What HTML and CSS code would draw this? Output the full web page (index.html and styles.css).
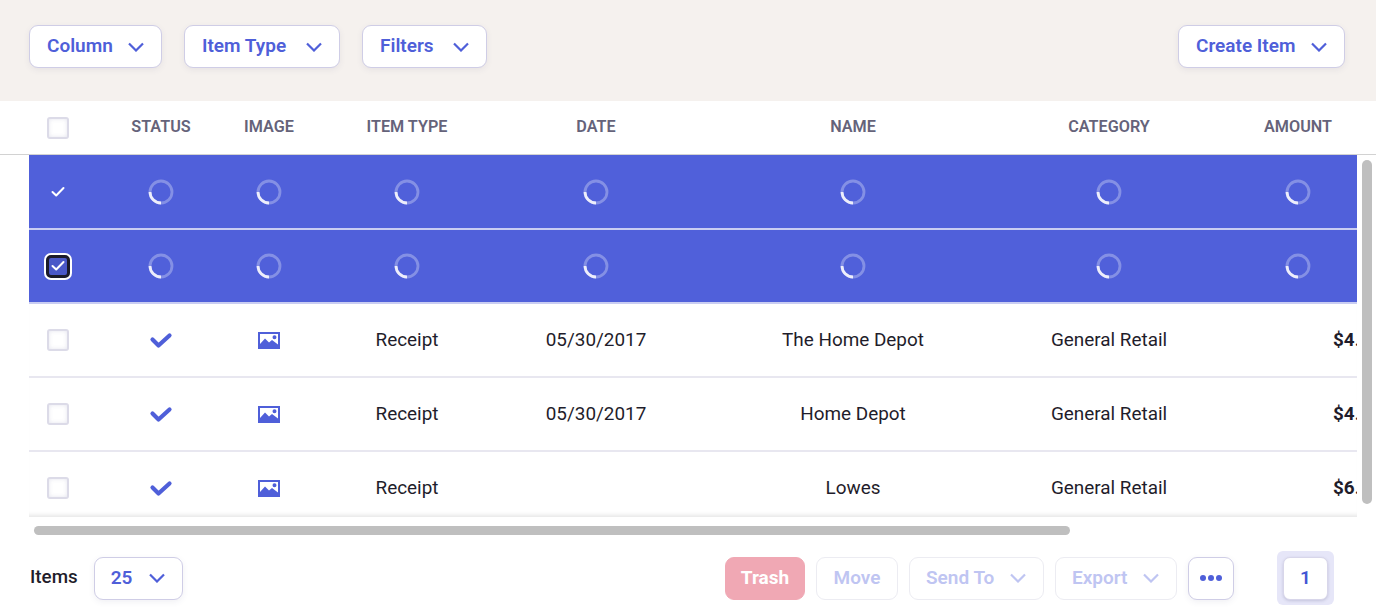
FILE: index.html
```html
<!DOCTYPE html>
<html lang="en">
<head>
<meta charset="utf-8">
<title>Items</title>
<link rel="stylesheet" href="styles.css">
</head>
<body>
<svg class="defs" width="0" height="0" aria-hidden="true">
  <symbol id="chev" viewBox="0 0 16 10"><path d="M1 1.500 8 8.500 15 1.500" fill="none" stroke="currentColor" stroke-width="2.200"/></symbol>
  <symbol id="tick" viewBox="0 0 24 18"><path d="M3.500 8.500 9.500 14.500 20.500 4.500" fill="none" stroke="currentColor" stroke-width="4.200" stroke-linecap="round" stroke-linejoin="round"/></symbol>
  <symbol id="small" viewBox="0 0 14 12"><path d="M1.500 6 5.200 9.500 12.500 2" fill="none" stroke="currentColor" stroke-width="2" stroke-linecap="round" stroke-linejoin="round"/></symbol>
  <symbol id="pic" viewBox="0 0 22 17"><path fill-rule="evenodd" fill="currentColor" d="M0 0H22V17H0ZM2 2V12L7 6.500 11 10.500 14 8 20 12.500V2ZM16.500 3.200A2 2 0 1 1 16.500 7.200 2 2 0 1 1 16.500 3.200Z"/></symbol>
  <symbol id="spin" viewBox="0 0 26 26"><circle cx="13" cy="13" r="11" fill="none" stroke="#fff" stroke-opacity=".3" stroke-width="2.800"/><path d="M2 13A11 11 0 0 0 13 24" fill="none" stroke="#fff" stroke-opacity=".85" stroke-width="2.800"/></symbol>
</svg>

<header class="toolbar">
  <div class="group">
    <button class="btn w-column">Column <svg class="chev"><use href="#chev"/></svg></button>
    <button class="btn w-type">Item Type <svg class="chev"><use href="#chev"/></svg></button>
    <button class="btn w-filters">Filters <svg class="chev"><use href="#chev"/></svg></button>
  </div>
  <button class="btn w-create">Create Item <svg class="chev"><use href="#chev"/></svg></button>
</header>

<section class="table">
  <div class="row head">
    <div class="cell"><span class="box"></span></div>
    <div class="cell">STATUS</div>
    <div class="cell">IMAGE</div>
    <div class="cell">ITEM TYPE</div>
    <div class="cell">DATE</div>
    <div class="cell">NAME</div>
    <div class="cell">CATEGORY</div>
    <div class="cell">AMOUNT</div>
  </div>
  <div class="viewport">
    <div class="rows">
      <div class="row sel first">
        <div class="cell"><svg class="small"><use href="#small"/></svg></div>
        <div class="cell"><svg class="spin"><use href="#spin"/></svg></div>
        <div class="cell"><svg class="spin"><use href="#spin"/></svg></div>
        <div class="cell"><svg class="spin"><use href="#spin"/></svg></div>
        <div class="cell"><svg class="spin"><use href="#spin"/></svg></div>
        <div class="cell"><svg class="spin"><use href="#spin"/></svg></div>
        <div class="cell"><svg class="spin"><use href="#spin"/></svg></div>
        <div class="cell"><svg class="spin"><use href="#spin"/></svg></div>
      </div>
      <div class="row sel">
        <div class="cell"><span class="focus"><svg class="small"><use href="#small"/></svg></span></div>
        <div class="cell"><svg class="spin"><use href="#spin"/></svg></div>
        <div class="cell"><svg class="spin"><use href="#spin"/></svg></div>
        <div class="cell"><svg class="spin"><use href="#spin"/></svg></div>
        <div class="cell"><svg class="spin"><use href="#spin"/></svg></div>
        <div class="cell"><svg class="spin"><use href="#spin"/></svg></div>
        <div class="cell"><svg class="spin"><use href="#spin"/></svg></div>
        <div class="cell"><svg class="spin"><use href="#spin"/></svg></div>
      </div>
      <div class="row">
        <div class="cell"><span class="box"></span></div>
        <div class="cell"><svg class="tick"><use href="#tick"/></svg></div>
        <div class="cell"><svg class="pic"><use href="#pic"/></svg></div>
        <div class="cell txt">Receipt</div>
        <div class="cell txt">05/30/2017</div>
        <div class="cell txt">The Home Depot</div>
        <div class="cell txt">General Retail</div>
        <div class="cell txt amount">$4.97</div>
      </div>
      <div class="row">
        <div class="cell"><span class="box"></span></div>
        <div class="cell"><svg class="tick"><use href="#tick"/></svg></div>
        <div class="cell"><svg class="pic"><use href="#pic"/></svg></div>
        <div class="cell txt">Receipt</div>
        <div class="cell txt">05/30/2017</div>
        <div class="cell txt">Home Depot</div>
        <div class="cell txt">General Retail</div>
        <div class="cell txt amount">$4.97</div>
      </div>
      <div class="row last">
        <div class="cell"><span class="box"></span></div>
        <div class="cell"><svg class="tick"><use href="#tick"/></svg></div>
        <div class="cell"><svg class="pic"><use href="#pic"/></svg></div>
        <div class="cell txt">Receipt</div>
        <div class="cell txt"></div>
        <div class="cell txt">Lowes</div>
        <div class="cell txt">General Retail</div>
        <div class="cell txt amount">$6.48</div>
      </div>
    </div>
    <div class="vbar"><div class="vthumb"></div></div>
  </div>
  <div class="hbar"><div class="hthumb"></div></div>
</section>

<footer class="footer">
  <div class="group items">
    <span class="label">Items</span>
    <button class="btn w-count">25 <svg class="chev"><use href="#chev"/></svg></button>
  </div>
  <div class="group actions">
    <button class="btn plain trash">Trash</button>
    <button class="btn plain off w-move">Move</button>
    <button class="btn off w-send">Send To <svg class="chev"><use href="#chev"/></svg></button>
    <button class="btn off w-export">Export <svg class="chev"><use href="#chev"/></svg></button>
    <button class="btn plain more" aria-label="More"><i></i><i></i><i></i></button>
    <div class="pager"><button class="page">1</button></div>
  </div>
</footer>
</body>
</html>
```
FILE: styles.css
```css
* { box-sizing: border-box; }
html, body { margin: 0; padding: 0; }
body {
  width: 1376px;
  height: 615px;
  overflow: hidden;
  background: #fff;
  font-family: Roboto, "Liberation Sans", sans-serif;
  color: #1f1d2b;
}
.defs { display: block; height: 0; }

.toolbar {
  height: 101px;
  background: #f5f1ee;
  padding: 25px 31px 0 29px;
  display: flex;
  justify-content: space-between;
  align-items: flex-start;
}
.group { display: flex; gap: 22px; align-items: center; }

.btn {
  height: 43px;
  padding: 0 17px 2px;
  display: flex;
  align-items: center;
  background: #fff;
  border: 1px solid #cfcde6;
  border-radius: 9px;
  box-shadow: 0 2px 6px rgba(60, 60, 110, .08);
  font: 600 19px Roboto, sans-serif;
  color: #4f5fd9;
  white-space: nowrap;
}
.chev { width: 16px; height: 10px; margin-left: auto; margin-bottom: -2px; }
.w-column { width: 133px; }
.w-type { width: 156px; }
.w-filters { width: 125px; }
.w-create { width: 167px; }
.w-count { width: 89px; padding-left: 16px; }
.w-move { width: 82px; }
.w-send { width: 135px; padding-left: 16px; }
.w-export { width: 122px; padding-left: 16px; }
.plain { justify-content: center; padding: 0 0 2px; }

.row {
  display: grid;
  grid-template-columns: 58px 148px 68px 208px 170px 344px 168px 210px;
  height: 74px;
  align-items: center;
  font-size: 18.900px;
  border-bottom: 2px solid #e8e7f0;
  white-space: nowrap;
}
.cell { display: flex; justify-content: center; align-items: center; min-width: 0; }
.txt { padding-bottom: 2px; }

.head {
  height: 54px;
  padding-left: 29px;
  font-size: 16.200px;
  font-weight: 600;
  color: #65637a;
  border-bottom: 1px solid #d2d2d2;
}
.head .cell + .cell { padding-bottom: 2px; }

.viewport {
  display: flex;
  height: 362px;
  padding-left: 29px;
}
.rows {
  width: 1328px;
  height: 362px;
  overflow: hidden;
  box-shadow: inset 0 -5px 4px -3px rgba(0, 0, 0, .1);
}
.sel { background: #5060da; border-bottom-color: #c9cdf2; color: #fff; }
.first { height: 75px; }
.last { border-bottom: 0; height: 72px; }
.amount { justify-content: flex-start; padding-left: 140px; font-weight: 700; }

.box {
  display: block;
  width: 22px;
  height: 22px;
  border: 2px solid #dcdbe8;
  border-radius: 3px;
  background: #fff;
  box-shadow: inset 0 0 4px rgba(80, 80, 140, .15);
}
.small { width: 14px; height: 12px; color: #fff; display: block; }
.focus {
  width: 24px;
  height: 23px;
  display: flex;
  align-items: center;
  justify-content: center;
  border: 3px solid #1b1b2a;
  border-radius: 5px;
  background: #4a58c8;
  box-shadow: 0 0 0 2px #fff;
}
.spin { width: 26px; height: 26px; }
.tick { width: 24px; height: 18px; color: #4f5fd9; }
.pic { width: 22px; height: 17px; color: #4f5fd9; }

.vbar { width: 19px; padding: 5px 4px 0 5px; }
.vthumb { width: 10px; height: 344px; background: #bfbfbf; border-radius: 5px; }

.hbar { height: 34px; padding: 9px 0 0 34px; }
.hthumb { width: 1036px; height: 9px; background: #bfbfbf; border-radius: 5px; }

.footer {
  height: 54px;
  display: flex;
  justify-content: space-between;
  align-items: center;
  padding: 0 42px 0 30px;
}
.items { gap: 16px; }
.label { font-size: 18.800px; font-weight: 500; color: #1f1d2b; padding-bottom: 2px; }
.actions { gap: 11px; }
.trash {
  width: 80px;
  background: #f0a8b4;
  border-color: #f0a8b4;
  color: #fff;
  font-weight: 700;
  box-shadow: none;
}
.off {
  color: #bfc5f2;
  border-color: #ececf2;
  box-shadow: none;
}
.more {
  width: 46px;
  gap: 2px;
  padding: 0;
}
.more i { width: 6px; height: 6px; border-radius: 50%; background: #4f5fd9; display: block; }
.pager {
  margin-left: 32px;
  width: 57px;
  height: 54px;
  padding: 6px;
  border-radius: 6px;
  background: #e6e6f8;
}
.page {
  display: block;
  width: 45px;
  height: 43px;
  padding: 0 0 2px;
  background: #fff;
  border: 1px solid #d8d6ea;
  border-radius: 7px;
  box-shadow: 0 1px 3px rgba(60, 60, 110, .2);
  font: 600 19px Roboto, sans-serif;
  color: #4255d4;
}
```
